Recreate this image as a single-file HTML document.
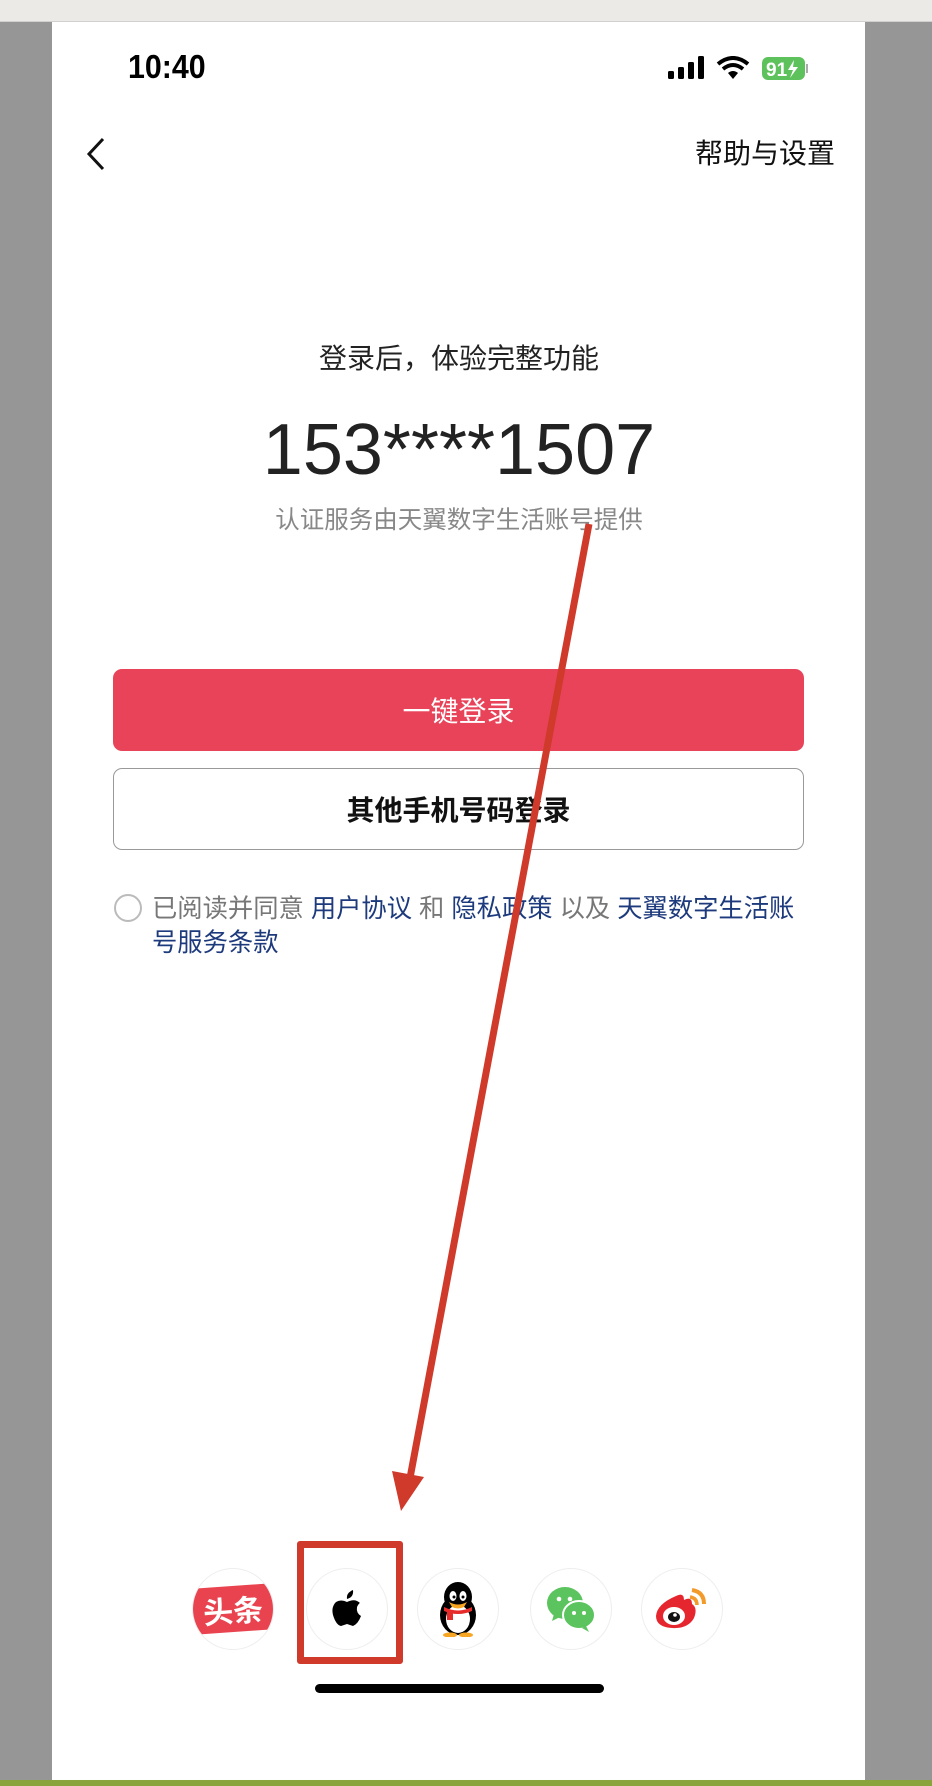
<!DOCTYPE html>
<html><head><meta charset="utf-8"><style>
*{margin:0;padding:0;box-sizing:border-box}
body{width:932px;height:1786px;background:#969696;position:relative;overflow:hidden;font-family:"Liberation Sans","Noto Sans CJK SC",sans-serif}
.top{position:absolute;left:0;top:0;width:932px;height:22px;background:#ebeae6;border-bottom:1px solid #d0d0d0}
.page{position:absolute;left:52px;top:22px;width:813px;height:1758px;background:#fff}
.bot{position:absolute;left:0;top:1780px;width:932px;height:6px;background:#8aa43c}
.a{position:absolute;white-space:nowrap}
.btn{position:absolute;left:113px;width:691px;height:82px;border-radius:9px;display:flex;align-items:center;justify-content:center;font-size:28px}
.ic{position:absolute;width:82px;height:82px;border-radius:50%;border:1px solid #eee;top:1568px;display:flex;align-items:center;justify-content:center;overflow:hidden}
.blue{color:#1d3a7c}
</style></head><body>
<div class="top"></div>
<div class="page"></div>
<div class="bot"></div>
<div class="a" style="left:128px;top:48px;font-size:33px;color:#000;font-weight:bold;transform:scaleX(0.92);transform-origin:left">10:40</div>
<svg class="a" style="left:668px;top:56px" width="140" height="25" viewBox="0 0 140 25">
<rect x="0" y="15" width="6" height="8" rx="1.5"/><rect x="10" y="11" width="6" height="12" rx="1.5"/><rect x="20" y="6" width="6" height="17" rx="1.5"/><rect x="30" y="0" width="6" height="23" rx="1.5"/>
<path d="M50 8 Q65 -4 80 8" stroke="#000" stroke-width="4" fill="none"/><path d="M55 13 Q65 5 75 13" stroke="#000" stroke-width="4" fill="none"/><path d="M60 17 L65 23 L70 17 Q65 13 60 17Z"/>
<rect x="94" y="1" width="43" height="23" rx="6" fill="#5ec25c"/><rect x="138" y="8" width="2" height="9" fill="#aaa"/>
<text x="98" y="20" font-family="Liberation Sans" font-weight="bold" font-size="19" fill="#fff">91</text><path d="M126 4 L120 14 L125 14 L122 22 L130 11 L125 11 Z" fill="#fff"/>
</svg>
<svg class="a" style="left:86px;top:137px" width="20" height="34"><path d="M17 2 L3 17 L17 32" stroke="#111" stroke-width="3" fill="none"/></svg>
<div class="a" style="right:97px;top:132px;font-size:28px;color:#111">帮助与设置</div>
<div class="a" style="left:0;width:918px;text-align:center;top:337px;font-size:28px;color:#222">登录后，体验完整功能</div>
<div class="a" style="left:0;width:918px;text-align:center;top:409px;font-size:72px;color:#222">153****1507</div>
<div class="a" style="left:0;width:918px;text-align:center;top:501px;font-size:24.5px;color:#888">认证服务由天翼数字生活账号提供</div>
<div class="btn" style="top:669px;background:#e9435a;color:#fff">一键登录</div>
<div class="btn" style="top:768px;border:1.5px solid #999;color:#111;font-weight:bold">其他手机号码登录</div>
<div class="a" style="left:114px;top:894px;width:28px;height:28px;border-radius:50%;border:2.5px solid #bbb"></div>
<div class="a" style="left:152px;top:892px;font-size:25.3px;color:#777;line-height:34px;white-space:normal;width:650px">已阅读并同意 <span class="blue">用户协议</span> 和 <span class="blue">隐私政策</span> 以及 <span class="blue">天翼数字生活账号服务条款</span></div>
<div class="ic" style="left:192px"><div style="width:100px;height:46px;background:#e9434f;transform:rotate(-4deg);color:#fff;font-weight:bold;font-size:30px;display:flex;align-items:center;justify-content:center;flex-shrink:0">头条</div></div>
<div class="ic" style="left:306px"><svg width="32" height="38" viewBox="0 0 32 38"><path d="M22 0 Q23 7 16 9 Q15 3 22 0Z"/><path d="M16 12 Q10 9 5 12 Q0 17 2 25 Q5 35 10 36 Q13 35 16 34 Q19 35 22 36 Q27 34 30 26 Q25 23 26 17 Q28 13 29 13 Q24 8 16 12Z"/></svg></div>
<div class="ic" style="left:417px"><svg width="50" height="56" viewBox="0 0 50 56"><ellipse cx="25" cy="34" rx="18" ry="20"/><ellipse cx="25" cy="16" rx="14" ry="15"/><ellipse cx="25" cy="38" rx="12" ry="14" fill="#fff"/><ellipse cx="20" cy="15" rx="3.5" ry="5" fill="#fff"/><ellipse cx="30" cy="15" rx="3.5" ry="5" fill="#fff"/><circle cx="21" cy="16" r="1.5"/><circle cx="30" cy="16" r="1.5"/><path d="M16 21 Q25 26 34 21 L31 26 Q25 29 19 26Z" fill="#f6a623"/><path d="M11 26 Q25 33 39 26 L39 30 Q25 36 11 30Z" fill="#e62b2b"/><rect x="14" y="30" width="6" height="9" fill="#e62b2b"/><ellipse cx="17" cy="54" rx="7" ry="2.5" fill="#f6a623"/><ellipse cx="33" cy="54" rx="7" ry="2.5" fill="#f6a623"/></svg></div>
<div class="ic" style="left:530px"><svg width="50" height="46" viewBox="0 0 50 46"><ellipse cx="19" cy="17" rx="18" ry="16" fill="#5cc45f"/><path d="M8 28 L6 35 L14 31Z" fill="#5cc45f"/><ellipse cx="33" cy="29" rx="16" ry="14" fill="#5cc45f" stroke="#fff" stroke-width="2"/><path d="M40 40 L43 46 L36 42Z" fill="#5cc45f"/><circle cx="13" cy="13" r="2.3" fill="#fff"/><circle cx="24" cy="13" r="2.3" fill="#fff"/><circle cx="28" cy="27" r="2" fill="#fff"/><circle cx="38" cy="27" r="2" fill="#fff"/></svg></div>
<div class="ic" style="left:641px"><svg width="56" height="50" viewBox="0 0 56 50"><path d="M22 12 Q30 8 30 16 Q38 12 38 20 Q44 24 40 34 Q34 45 18 44 Q2 43 2 32 Q3 20 22 12Z" fill="#e6262e"/><ellipse cx="20" cy="32" rx="11" ry="9" fill="#fff"/><ellipse cx="20" cy="33" rx="6" ry="5" fill="#111"/><circle cx="21" cy="31" r="1.8" fill="#fff"/><path d="M38 6 Q50 8 50 20" stroke="#f29a2a" stroke-width="4" fill="none"/><path d="M36 13 Q43 14 43 21" stroke="#f29a2a" stroke-width="3.5" fill="none"/></svg></div>
<div class="a" style="left:297px;top:1541px;width:106px;height:123px;border:7px solid #cf3a2b;border-radius:3px"></div>
<svg class="a" style="left:0;top:0" width="932" height="1786"><line x1="589" y1="524" x2="410" y2="1478" stroke="#cf3a2b" stroke-width="7"/><path d="M392 1471 L424 1477 L401 1511Z" fill="#cf3a2b"/></svg>
<div class="a" style="left:315px;top:1684px;width:289px;height:9px;border-radius:5px;background:#000"></div>
</body></html>
